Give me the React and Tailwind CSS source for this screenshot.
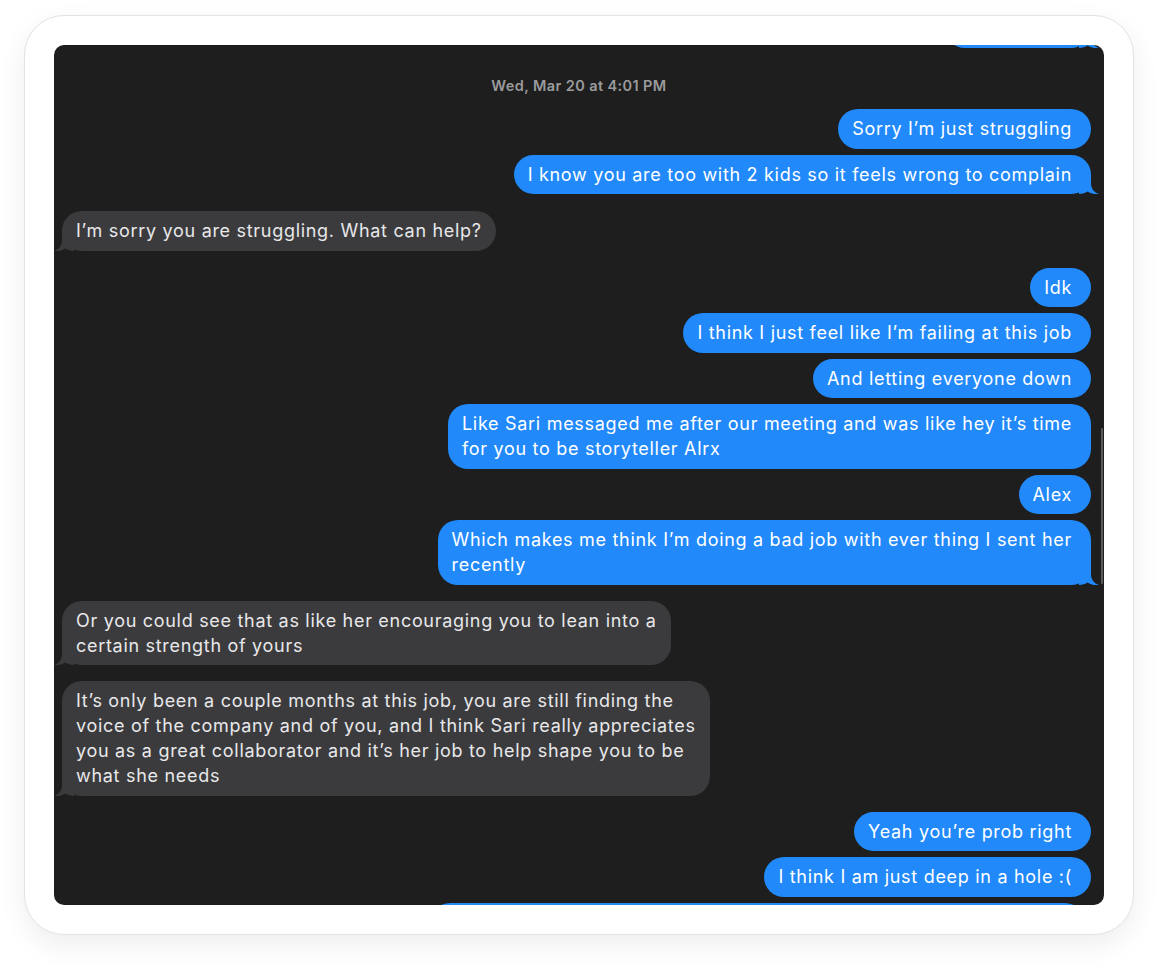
import React from "react";

const messages = [
  { from: "me", text: ["Sorry I’m just struggling"], mt: "mt-[13px]" },
  { from: "me", text: ["I know you are too with 2 kids so it feels wrong to complain"], tail: true, mt: "mt-[6px]" },
  { from: "them", text: ["I’m sorry you are struggling. What can help?"], tail: true, mt: "mt-[17px]" },
  { from: "me", text: ["Idk"], mt: "mt-[17px]" },
  { from: "me", text: ["I think I just feel like I’m failing at this job"], mt: "mt-[6px]" },
  { from: "me", text: ["And letting everyone down"], mt: "mt-[6px]" },
  {
    from: "me",
    text: ["Like Sari messaged me after our meeting and was like hey it’s time", "for you to be storyteller Alrx"],
    mt: "mt-[6px]",
  },
  { from: "me", text: ["Alex"], mt: "mt-[6px]" },
  {
    from: "me",
    text: ["Which makes me think I’m doing a bad job with ever thing I sent her", "recently"],
    tail: true,
    mt: "mt-[6px]",
  },
  {
    from: "them",
    text: ["Or you could see that as like her encouraging you to lean into a", "certain strength of yours"],
    tail: true,
    mt: "mt-[16px]",
  },
  {
    from: "them",
    text: [
      "It’s only been a couple months at this job, you are still finding the",
      "voice of the company and of you, and I think Sari really appreciates",
      "you as a great collaborator and it’s her job to help shape you to be",
      "what she needs",
    ],
    tail: true,
    mt: "mt-[16px]",
  },
  { from: "me", text: ["Yeah you’re prob right"], mt: "mt-[16px]" },
  { from: "me", text: ["I think I am just deep in a hole :("], mt: "mt-[6px]" },
];

// little curl under the last bubble of a group
function Tail({ color, side }) {
  return (
    <svg
      width="20"
      height="20"
      viewBox="0 0 20 20"
      className={`absolute bottom-0 ${side === "right" ? "right-[-8px]" : "left-[-8px] -scale-x-100"}`}
    >
      <path
        d="M0,0 H12 V9 C12,14.5 15,18.5 20,20 C15.5,20.6 11.5,19.6 8.5,17.6 C6.5,19.2 3.5,20 0,20 Z"
        fill={color}
      />
    </svg>
  );
}

function Bubble({ msg }) {
  const mine = msg.from === "me";
  return (
    <div className={`flex ${mine ? "justify-end pr-[13px]" : "justify-start pl-[8px]"} ${msg.mt}`}>
      <div
        className={`relative rounded-[20px] py-[7.25px] text-[18px] tracking-[0.7px] leading-[25px] whitespace-nowrap ${
          mine ? "bg-[#2189fa] text-white pl-[14px] pr-[19px]" : "bg-[#3b3b3d] text-[#e8e8ea] px-[14px]"
        }`}
      >
        {msg.tail && <Tail color={mine ? "#2189fa" : "#3b3b3d"} side={mine ? "right" : "left"} />}
        <span className="relative">
          {msg.text.map((line, i) => (
            <React.Fragment key={i}>
              {i > 0 && <br />}
              {line}
            </React.Fragment>
          ))}
        </span>
      </div>
    </div>
  );
}

export default function App() {
  return (
    <div
      className="w-[1156px] h-[965px] bg-white pt-[15px] pl-[24px]"
      style={{ fontFamily: "Inter, 'Noto Sans', sans-serif" }}
    >
      <div className="w-[1110px] h-[920px] rounded-[40px] bg-white border border-[#e2e2e7] shadow-[0_10px_28px_rgba(0,0,0,0.07)] p-[29px]">
        <div className="relative w-[1050px] h-[860px] rounded-[10px] bg-[#1e1e1e] overflow-hidden">
          {/* bubble scrolled mostly out of view */}
          <div className="flex justify-end pr-[13px] -mt-[37px]">
            <div className="relative w-[146px] h-[40px] rounded-[20px] bg-[#2189fa]">
              <Tail color="#2189fa" side="right" />
            </div>
          </div>

          <div className="mt-[28px] text-center text-[14.5px] tracking-[0.4px] leading-[20px] font-semibold text-[#9b9b9d]">
            Wed, Mar 20 at 4:01 PM
          </div>

          {messages.map((m, i) => (
            <Bubble key={i} msg={m} />
          ))}

          {/* next bubble peeking in at the bottom */}
          <div className="flex justify-end pr-[19px] mt-[6px]">
            <div className="w-[655px] h-[60px] rounded-[20px] bg-[#2189fa]" />
          </div>

          {/* scroll indicator */}
          <div className="absolute right-[1px] top-[383px] w-[2px] h-[156px] rounded-full bg-[#5a5a5c]" />
        </div>
      </div>
    </div>
  );
}
